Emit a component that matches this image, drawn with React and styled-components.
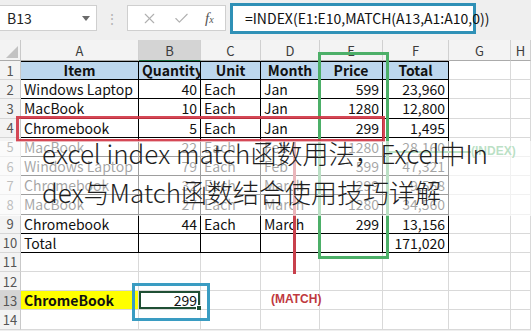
import React from 'react';
import styled, { createGlobalStyle } from 'styled-components';
import { X, Check } from 'lucide-react';

// ----------------------------------------------------------------------

const GlobalStyle = createGlobalStyle`
    html, body {
        margin: 0;
        padding: 0;
        background: #efefef;
        overflow: hidden;
    }
`;

const CELL_FONT = `"Noto Sans CJK SC", "Liberation Sans", sans-serif`;

const Page = styled.div`
    position: relative;
    width: 531px;
    height: 331px;
    overflow: hidden;
    background: #efefef;
    font-family: ${CELL_FONT};
`;

const FormulaBar = styled.div`
    display: flex;
    align-items: center;
    height: 36px;
`;

const NameBox = styled.div`
    display: flex;
    align-items: center;
    justify-content: space-between;
    box-sizing: border-box;
    width: 97px;
    height: 26px;
    padding: 0 6px 0 7px;
    background: #fff;
    border: 1px solid #cfcfcf;
    border-left: none;
    font-size: 14px;
    color: #222;
`;

const DropArrow = styled.span`
    width: 0;
    height: 0;
    border-left: 4px solid transparent;
    border-right: 4px solid transparent;
    border-top: 5px solid #6b6b6b;
`;

const Grip = styled.div`
    width: 30px;
    text-align: center;
    color: #b5b5b5;
    font-size: 14px;
`;

const FxBox = styled.div`
    display: flex;
    align-items: center;
    justify-content: space-around;
    box-sizing: border-box;
    width: 99px;
    height: 26px;
    padding: 0 4px 0 6px;
    background: #fff;
    border: 1px solid #cfcfcf;
    color: #b0b0b0;
`;

const FxLabel = styled.span`
    font-family: "Liberation Serif", serif;
    font-style: italic;
    font-size: 15px;
    color: #555;

    small {
        font-size: 10px;
    }
`;

const FormulaInput = styled.div`
    display: flex;
    align-items: center;
    box-sizing: border-box;
    width: 246px;
    height: 31px;
    margin-left: 4px;
    padding-left: 12px;
    background: #fff;
    border: 3px solid #2f90b6;
    font-size: 14px;
    color: #111;
    white-space: nowrap;
`;

const Sheet = styled.div`
    display: grid;
    grid-template-columns: 21px 118px 62px 60px 59px 63px 66px 62px 1fr;
    grid-template-rows: 21px repeat(14, 19.2px);
    margin-top: 4px;
    background: #fff;
`;

const Corner = styled.div`
    position: relative;
    background: #f3f3f3;
    border-right: 1px solid #c9c9c9;
    border-bottom: 1px solid #ababab;

    &::after {
        content: '';
        position: absolute;
        right: 2px;
        bottom: 2px;
        border-left: 12px solid transparent;
        border-bottom: 12px solid #c2c2c2;
    }
`;

const ColHead = styled.div`
    display: flex;
    align-items: center;
    justify-content: center;
    background: ${p => (p.$selected ? '#d4d4d4' : '#f3f3f3')};
    border-right: 1px solid #d0d0d0;
    border-bottom: 1px solid ${p => (p.$selected ? '#217346' : '#ababab')};
    font-size: 13px;
    color: #3c3c3c;
`;

const RowHead = styled.div`
    display: flex;
    align-items: center;
    justify-content: center;
    background: ${p => (p.$selected ? '#d4d4d4' : '#f3f3f3')};
    border-right: 1px solid ${p => (p.$table ? '#000' : '#c9c9c9')};
    border-bottom: 1px solid #d6d6d6;
    font-size: 13px;
    color: #555;
`;

const Cell = styled.div`
    position: relative;
    box-sizing: border-box;
    padding: 0 3px;
    background: ${p => p.$bg || '#fff'};
    border-right: 1px solid ${p => (p.$table ? '#000' : '#d9d9d9')};
    border-bottom: 1px solid ${p => (p.$table ? '#000' : '#d9d9d9')};
    box-shadow: ${p => (p.$selected ? 'inset 0 0 0 2px #1f4f34' : p.$top ? 'inset 0 1px 0 #000' : 'none')};
    font-size: 14px;
    line-height: 18px;
    font-weight: ${p => (p.$bold ? 700 : 400)};
    text-align: ${p => p.$align || 'left'};
    color: #111;
    white-space: nowrap;
    overflow: visible;
`;

const FillHandle = styled.span`
    position: absolute;
    right: -3px;
    bottom: -3px;
    width: 5px;
    height: 5px;
    background: #1f4f34;
    border: 1px solid #fff;
`;

const Frame = styled.div`
    position: absolute;
    box-sizing: border-box;
    border: 3px solid ${p => p.$color};
`;

const Bar = styled.div`
    position: absolute;
    background: ${p => p.$color};
`;

const Tag = styled.div`
    position: absolute;
    font-family: "Liberation Sans", sans-serif;
    font-size: 12px;
    font-weight: 700;
    color: ${p => p.$color};
`;

const Veil = styled.div`
    position: absolute;
    left: 0;
    top: 141px;
    width: 531px;
    height: 75px;
    background: rgba(255, 255, 255, 0.62);
`;

const Caption = styled.div`
    position: absolute;
    left: 42px;
    top: 133px;
    font-family: "Noto Sans CJK SC", "Noto Sans", sans-serif;
    font-weight: 300;
    font-size: 26px;
    line-height: 39px;
    color: #1e1e1e;
    white-space: nowrap;

    span {
        display: block;
    }
`;

// ----------------------------------------------------------------------

const COLUMNS = ['A', 'B', 'C', 'D', 'E', 'F', 'G', 'H'];

const TABLE = [
    ['Item', 'Quantity', 'Unit', 'Month', 'Price', 'Total'],
    ['Windows Laptop', '40', 'Each', 'Jan', '599', '23,960'],
    ['MacBook', '10', 'Each', 'Jan', '1280', '12,800'],
    ['Chromebook', '5', 'Each', 'Jan', '299', '1,495'],
    ['MacBook', '22', 'Each', 'Feb', '1280', '28,160'],
    ['Windows Laptop', '79', 'Each', 'Feb', '599', '47,321'],
    ['Chromebook', '32', 'Each', 'March', '299', '9,568'],
    ['MacBook', '27', 'Each', 'March', '1280', '34,560'],
    ['Chromebook', '44', 'Each', 'March', '299', '13,156'],
    ['Total', '', '', '', '', '171,020'],
];

const NUMERIC = [1, 4, 5];

function renderCell(row, col) {
    const key = `${row}-${col}`;
    const inTable = row <= 10 && col <= 5;

    if (inTable) {
        const value = TABLE[row - 1][col];
        if (row === 1) {
            return (
                <Cell key={key} $table $top $bold $align="center" $bg="#bdd7ee">
                    {value}
                </Cell>
            );
        }
        return (
            <Cell key={key} $table $align={NUMERIC.includes(col) ? 'right' : 'left'}>
                {value}
            </Cell>
        );
    }

    if (row === 13 && col === 0) {
        return <Cell key={key} $bold $bg="#ffff00">ChromeBook</Cell>;
    }
    if (row === 13 && col === 1) {
        return (
            <Cell key={key} $selected $align="right">
                299
                <FillHandle />
            </Cell>
        );
    }
    return <Cell key={key} />;
}

export default function App() {
    const rows = Array.from({ length: 14 }, (_, i) => i + 1);

    return (
        <Page>
            <GlobalStyle />

            <FormulaBar>
                <NameBox>
                    B13
                    <DropArrow />
                </NameBox>
                <Grip>⋮</Grip>
                <FxBox>
                    <X size={17} strokeWidth={1.6} />
                    <Check size={17} strokeWidth={1.6} />
                    <FxLabel>f<small>x</small></FxLabel>
                </FxBox>
                <FormulaInput>=INDEX(E1:E10,MATCH(A13,A1:A10,0))</FormulaInput>
            </FormulaBar>

            <Sheet>
                <Corner />
                {COLUMNS.map((c) => (
                    <ColHead key={c} $selected={c === 'B'}>{c}</ColHead>
                ))}
                {rows.map((r) => (
                    <React.Fragment key={r}>
                        <RowHead $selected={r === 13}>{r}</RowHead>
                        {COLUMNS.map((_, ci) => renderCell(r, ci))}
                    </React.Fragment>
                ))}
            </Sheet>

            {/* annotations drawn over the sheet */}
            <Frame $color="#4caf68" style={{ left: 318, top: 52, width: 71, height: 207 }} />
            <Bar $color="#4caf68" style={{ left: 389, top: 151, width: 82, height: 2 }} />
            <Tag $color="#4caf68" style={{ left: 471, top: 144 }}>(INDEX)</Tag>

            <Frame $color="rgba(208, 52, 68, 0.9)" style={{ left: 16, top: 116, width: 369, height: 26 }} />
            <Bar $color="#c8404c" style={{ left: 293, top: 141, width: 3, height: 133 }} />
            <Tag $color="#c0393f" style={{ left: 271, top: 292 }}>(MATCH)</Tag>

            <Frame $color="#3a9cc2" style={{ left: 132, top: 283, width: 78, height: 38 }} />

            <Veil />
            <Caption>
                <span>excel index match函数用法，Excel中In</span>
                <span>dex与Match函数结合使用技巧详解</span>
            </Caption>
        </Page>
    );
}
